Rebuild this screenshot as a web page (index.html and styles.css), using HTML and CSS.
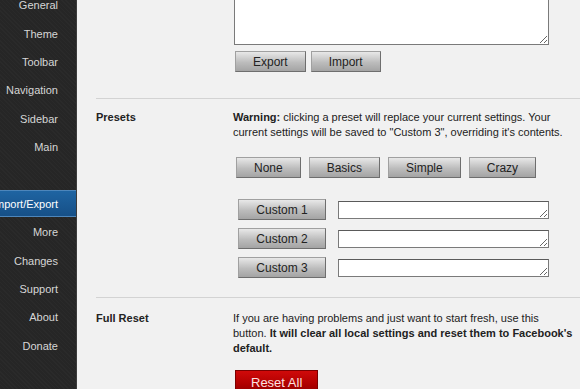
FILE: index.html
```html
<!DOCTYPE html>
<html lang="en">
<head>
    <meta charset="UTF-8">
    <title>Options - Import/Export</title>
    <link rel="stylesheet" href="styles.css">
</head>
<body>
    <ul class="sidebar">
        <li>General</li>
        <li>Theme</li>
        <li>Toolbar</li>
        <li>Navigation</li>
        <li>Sidebar</li>
        <li>Main</li>
        <li class="spacer"></li>
        <li class="active">Import/Export</li>
        <li>More</li>
        <li>Changes</li>
        <li>Support</li>
        <li>About</li>
        <li>Donate</li>
    </ul>

    <div class="main">
        <div class="content">
            <div class="section first">
                <div class="label"></div>
                <div class="body">
                    <textarea class="big"></textarea>
                    <div class="buttons">
                        <button class="btn">Export</button>
                        <button class="btn">Import</button>
                    </div>
                </div>
            </div>

            <div class="section presets">
                <div class="label">Presets</div>
                <div class="body">
                    <p><strong>Warning:</strong> clicking a preset will replace your current settings. Your current settings will be saved to "Custom 3", overriding it's contents.</p>
                    <div class="buttons preset-row">
                        <button class="btn">None</button>
                        <button class="btn">Basics</button>
                        <button class="btn">Simple</button>
                        <button class="btn">Crazy</button>
                    </div>
                    <div class="custom-list">
                        <div class="custom"><button class="btn">Custom 1</button><textarea></textarea></div>
                        <div class="custom"><button class="btn">Custom 2</button><textarea></textarea></div>
                        <div class="custom"><button class="btn">Custom 3</button><textarea></textarea></div>
                    </div>
                </div>
            </div>

            <div class="section reset">
                <div class="label">Full Reset</div>
                <div class="body">
                    <p>If you are having problems and just want to start fresh, use this button. <strong>It will clear all local settings and reset them to Facebook's default.</strong></p>
                    <button class="btn red">Reset All</button>
                </div>
            </div>
        </div>
    </div>
</body>
</html>
```

FILE: styles.css
```css
html, body {
    margin: 0;
    height: 100%;
    overflow: hidden;
}
body {
    display: flex;
    font-family: "Liberation Sans", Arial, sans-serif;
    font-size: 11px;
    color: #222;
    background-color: #f1f1f1;
}
.sidebar {
    list-style: none;
    margin: 0;
    padding: 0;
    width: 76px;
    flex: none;
    border-right: 1px solid #3c3c3c;
    background-color: #262626;
    background-image: repeating-linear-gradient(45deg, rgba(255,255,255,0.02) 0 1px, transparent 1px 3px);
    overflow: hidden;
}
.sidebar li {
    height: 28.4px;
    display: flex;
    align-items: center;
    justify-content: flex-end;
    padding-right: 18px;
    white-space: nowrap;
    color: #d6d6d6;
}
.sidebar li:first-child {
    margin-top: -9px;
}
.sidebar li.active {
    color: #fff;
    background: linear-gradient(#1f65a3, #164f86);
    box-shadow: inset 0 1px 0 #4d86bb, inset 0 -1px 0 #4d86bb;
    height: 27px;
    margin: 0.7px 0;
}
.main {
    flex: 1;
    overflow: hidden;
}
.content {
    margin-top: -55px;
    margin-left: 19px;
}
.section {
    display: grid;
    grid-template-columns: 137px 1fr;
    padding-right: 5px;
    border-top: 1px solid #d3d3d3;
}
.section.first {
    border-top: none;
    padding-bottom: 26px;
}
.label {
    font-weight: bold;
    line-height: 15px;
}
.body p {
    margin: 0;
    line-height: 15px;
}
textarea {
    font-family: inherit;
    margin: 0;
    padding: 2px;
    box-sizing: border-box;
    background: #fff;
    border: 1px solid #7a7a7a;
    border-top-color: #5a5a5a;
}
textarea.big {
    display: block;
    width: 315px;
    height: 100px;
    margin-left: 1px;
}
.buttons {
    display: flex;
    gap: 5px;
    margin-top: 6px;
    margin-left: 2px;
}
.btn {
    font-family: inherit;
    font-size: 12px;
    color: #222;
    height: 21px;
    padding: 0 17px;
    border: 1px solid #a0a0a0;
    border-right-color: #6e6e6e;
    border-bottom-color: #6e6e6e;
    background: linear-gradient(#e8e8e8, #bcbcbc 55%, #a4a4a4);
    cursor: pointer;
}
.presets {
    padding-top: 11px;
    padding-bottom: 19px;
}
.preset-row {
    gap: 8px;
    margin-top: 17px;
    margin-left: 3px;
}
.custom-list {
    display: flex;
    flex-direction: column;
    gap: 8px;
    margin-top: 21px;
    margin-left: 5px;
}
.custom {
    display: flex;
    align-items: center;
    gap: 12px;
}
.custom .btn {
    width: 88px;
    padding: 0;
}
.custom textarea {
    width: 211px;
    height: 18px;
    resize: both;
}
.reset {
    padding-top: 13px;
}
.btn.red {
    margin-top: 14px;
    margin-left: 2px;
    height: 24px;
    padding: 0 15px;
    color: #fde0e0;
    font-size: 13px;
    border: 1px solid #7a0000;
    background: linear-gradient(#d00a0a, #b00000 60%, #900000);
}
```
